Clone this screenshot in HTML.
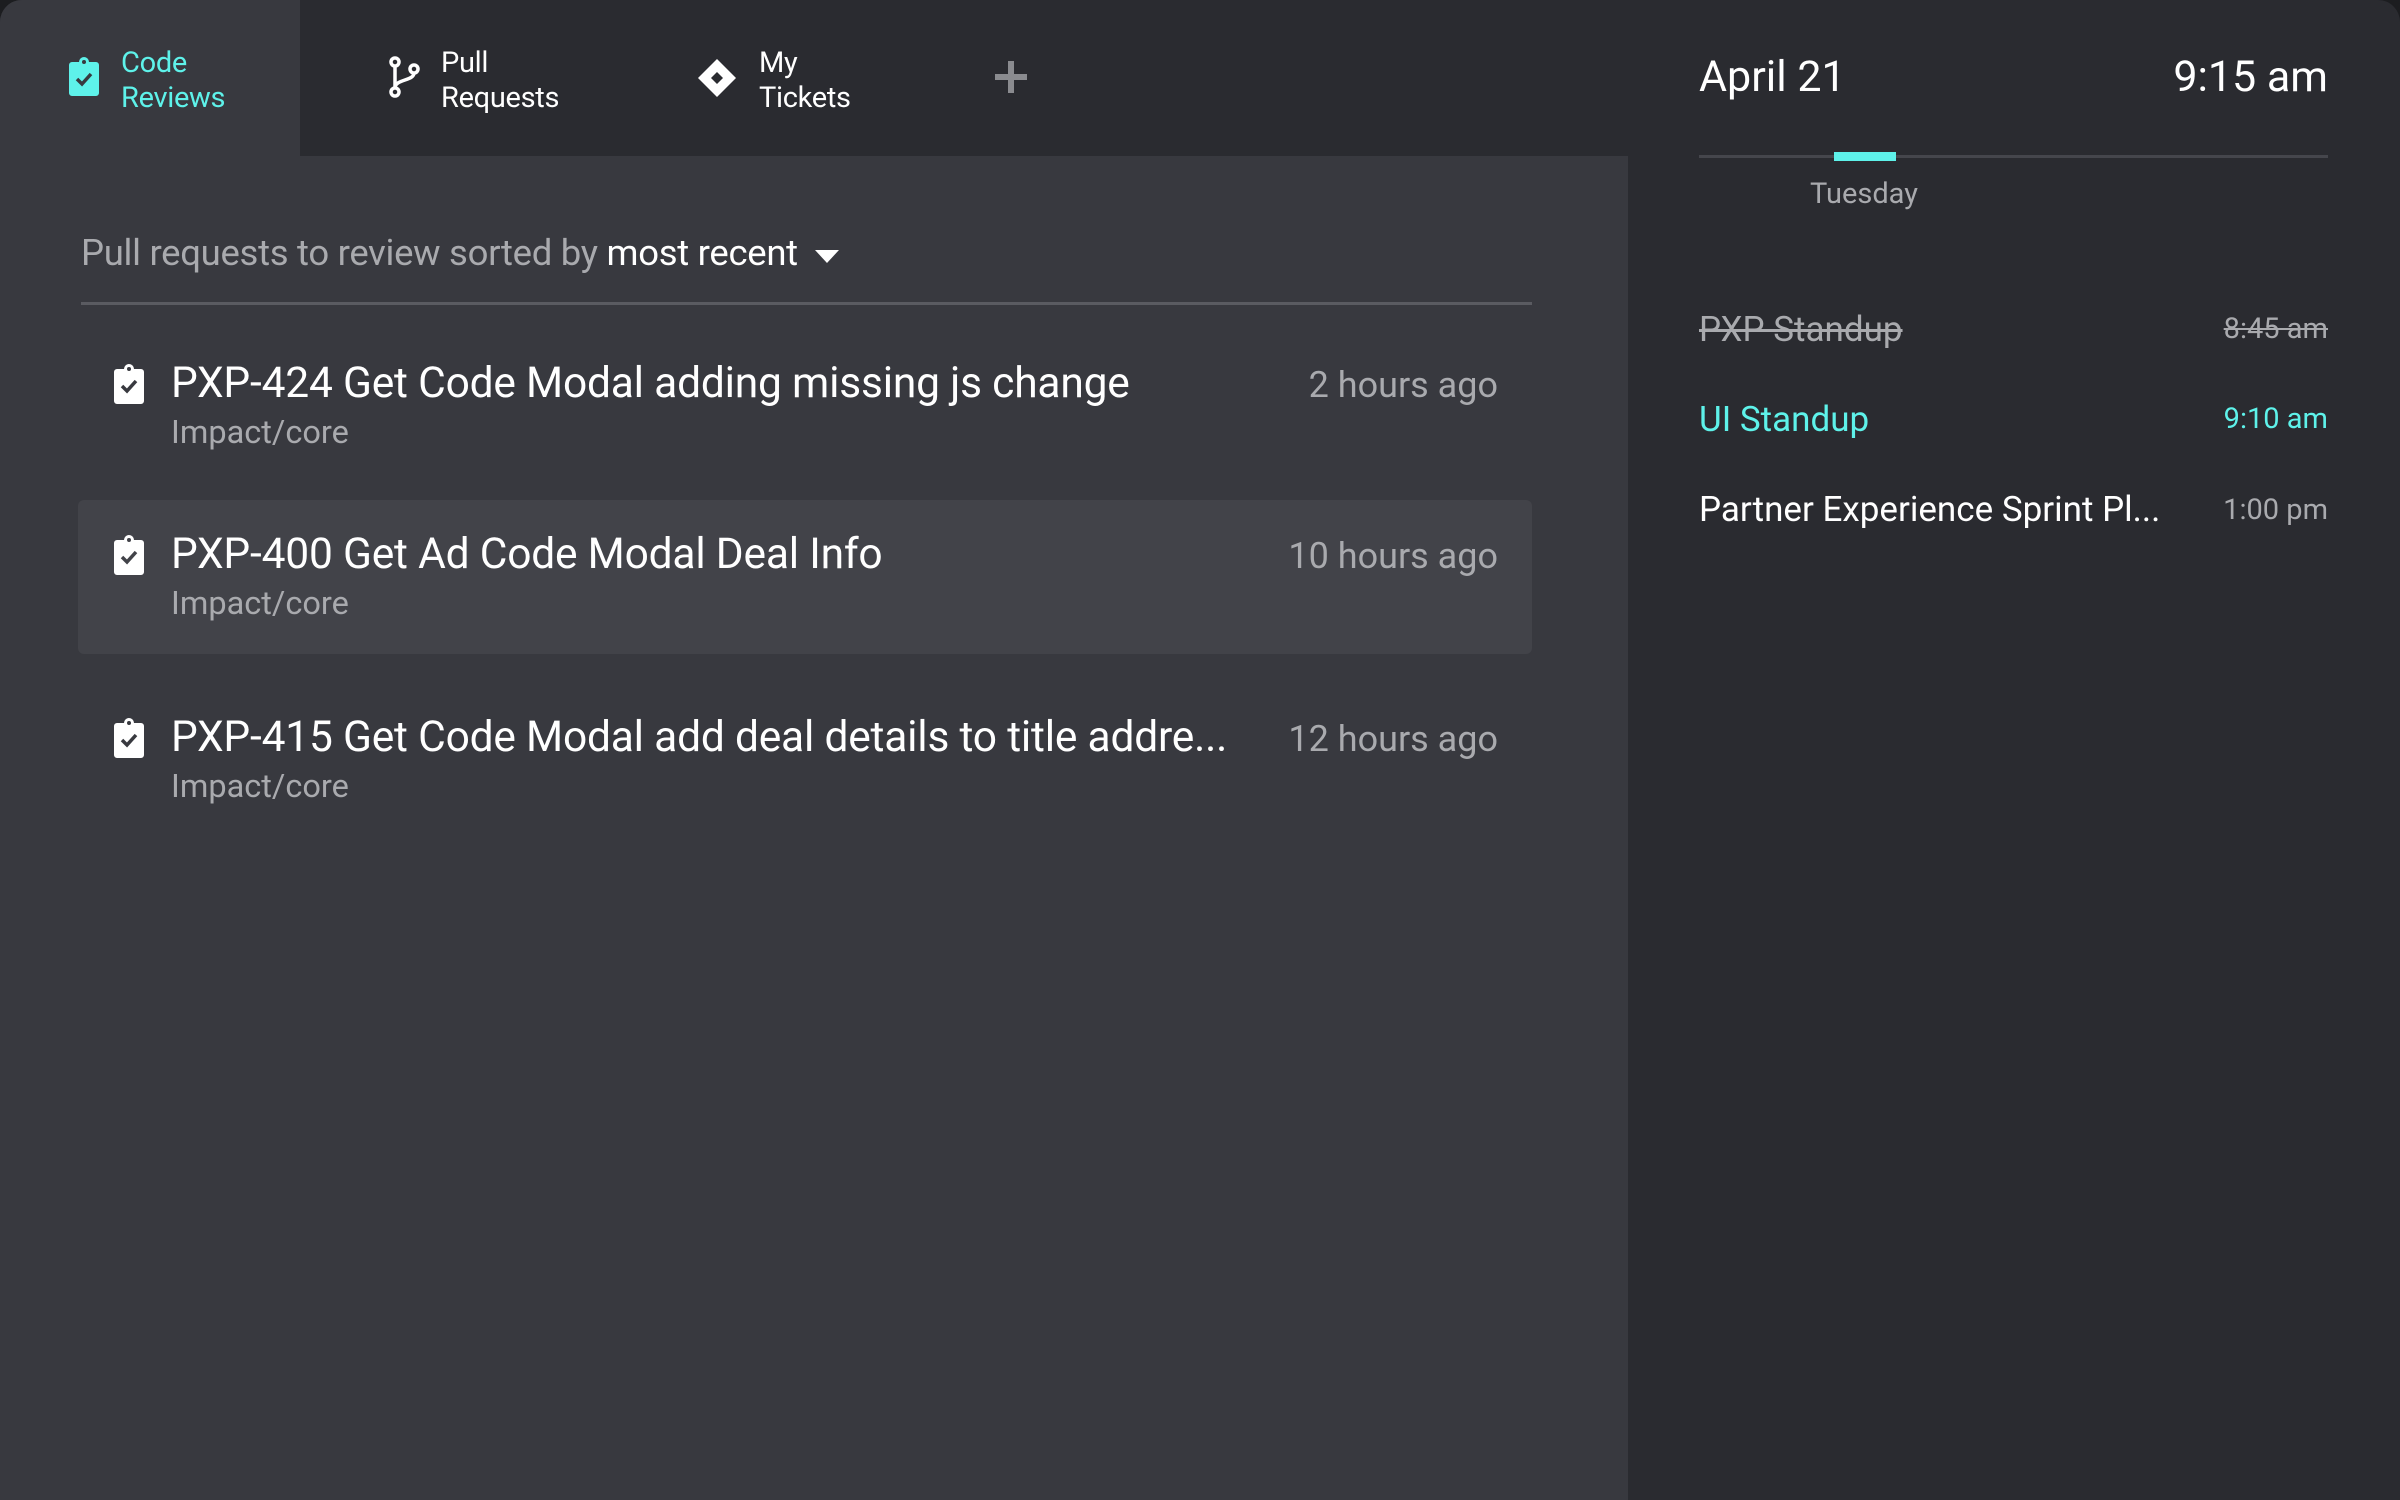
<!DOCTYPE html>
<html><head><meta charset="utf-8"><style>
*{margin:0;padding:0;box-sizing:border-box}
body{width:2400px;height:1500px;background:#1c1d20;font-family:"Roboto","Liberation Sans",sans-serif;overflow:hidden;position:relative}
.left{position:absolute;left:0;top:0;width:1628px;height:1500px;background:#38393f;border-top-left-radius:22px;overflow:hidden}
.right{position:absolute;left:1628px;top:0;width:772px;height:1500px;background:#2a2b30;border-top-right-radius:22px}
.tabbar{position:absolute;left:0;top:0;width:1628px;height:156px;background:#2a2b30}
.tab{position:absolute;top:0;height:156px}
.active{left:0;width:300px;background:#38393f}
.tl{position:absolute;font-size:29px;line-height:35px;color:#fff;top:46px;letter-spacing:-0.3px}
.abs{position:absolute}
.sort{position:absolute;left:81px;top:231px;font-size:36.5px;color:#a9aaae;letter-spacing:-0.3px}
.sort b{font-weight:normal;color:#fff}
.rule{position:absolute;left:81px;top:302px;width:1451px;height:3px;background:#5a5b61}
.hl{position:absolute;left:78px;top:500px;width:1454px;height:154px;background:#424349;border-radius:6px}
.title{position:absolute;left:171px;font-size:42.5px;color:#fff;letter-spacing:-0.2px;white-space:nowrap}
.sub{position:absolute;left:171px;font-size:32.5px;color:#a9aaae}
.time{position:absolute;right:130px;font-size:36px;color:#a9aaae;text-align:right}
.ev{position:absolute;left:1699px;font-size:35px;color:#fff}
.evt{position:absolute;right:72px;font-size:29px;color:#a9aaae}
</style></head><body>
<div class="left">
 <div class="tabbar"></div>
 <div class="tab active"></div>
 <svg class="abs" style="left:69px;top:55px" width="30" height="41" viewBox="0 0 30 41"><path d="M3 7h7a5 5 0 0 1 10 0h7a3 3 0 0 1 3 3v28a3 3 0 0 1-3 3H3a3 3 0 0 1-3-3V10a3 3 0 0 1 3-3z" fill="#5ef2ea"/><circle cx="15" cy="7" r="2" fill="#38393f"/><path d="M8 24l5 5 9-10" stroke="#38393f" stroke-width="3.5" fill="none"/></svg>
 <div class="tl" style="left:121px;color:#5ef2ea">Code<br>Reviews</div>
 <svg class="abs" style="left:388px;top:56px" width="32" height="42" viewBox="0 0 32 42"><g stroke="#fff" stroke-width="3.5" fill="none"><circle cx="7" cy="6" r="4"/><circle cx="7" cy="36" r="4"/><circle cx="26" cy="13" r="4"/><path d="M7 10v22M26 17c0 8-19 6-19 15"/></g></svg>
 <div class="tl" style="left:441px">Pull<br>Requests</div>
 <svg class="abs" style="left:697px;top:58px" width="40" height="40" viewBox="0 0 40 40"><path d="M20 1l19 19-19 19L1 20z" fill="#fff"/><path d="M20 14l6 6-6 6-6-6z" fill="#2a2b30"/></svg>
 <div class="tl" style="left:759px">My<br>Tickets</div>
 <div class="abs" style="left:995px;top:74px;width:32px;height:6px;background:#8a8b8f"></div>
 <div class="abs" style="left:1008px;top:61px;width:6px;height:32px;background:#8a8b8f"></div>

 <div class="sort">Pull requests to review sorted by <b>most recent</b></div>
 <svg class="abs" style="left:815px;top:250px" width="24" height="14"><path d="M0 0h24L12 13z" fill="#fff"/></svg>
 <div class="rule"></div>
 <div class="hl"></div>

 <svg class="abs" style="left:114px;top:362px" width="30" height="42" viewBox="0 0 30 42"><path d="M3 7h7a5 5 0 0 1 10 0h7a3 3 0 0 1 3 3v29a3 3 0 0 1-3 3H3a3 3 0 0 1-3-3V10a3 3 0 0 1 3-3z" fill="#fff"/><circle cx="15" cy="7" r="2" fill="#38393f"/><path d="M8 24l5 5 9-10" stroke="#38393f" stroke-width="3.5" fill="none"/></svg>
 <div class="title" style="top:359px">PXP-424 Get Code Modal adding missing js change</div>
 <div class="sub" style="top:413px">Impact/core</div>
 <div class="time" style="top:364px">2 hours ago</div>

 <svg class="abs" style="left:114px;top:533px" width="30" height="42" viewBox="0 0 30 42"><path d="M3 7h7a5 5 0 0 1 10 0h7a3 3 0 0 1 3 3v29a3 3 0 0 1-3 3H3a3 3 0 0 1-3-3V10a3 3 0 0 1 3-3z" fill="#fff"/><circle cx="15" cy="7" r="2" fill="#424349"/><path d="M8 24l5 5 9-10" stroke="#424349" stroke-width="3.5" fill="none"/></svg>
 <div class="title" style="top:530px">PXP-400 Get Ad Code Modal Deal Info</div>
 <div class="sub" style="top:584px">Impact/core</div>
 <div class="time" style="top:535px">10 hours ago</div>

 <svg class="abs" style="left:114px;top:716px" width="30" height="42" viewBox="0 0 30 42"><path d="M3 7h7a5 5 0 0 1 10 0h7a3 3 0 0 1 3 3v29a3 3 0 0 1-3 3H3a3 3 0 0 1-3-3V10a3 3 0 0 1 3-3z" fill="#fff"/><circle cx="15" cy="7" r="2" fill="#38393f"/><path d="M8 24l5 5 9-10" stroke="#38393f" stroke-width="3.5" fill="none"/></svg>
 <div class="title" style="top:713px">PXP-415 Get Code Modal add deal details to title addre...</div>
 <div class="sub" style="top:767px">Impact/core</div>
 <div class="time" style="top:718px">12 hours ago</div>
</div>
<div class="right"></div>
<div class="abs" style="left:1699px;top:52px;font-size:43px;color:#fff">April 21</div>
<div class="abs" style="right:72px;top:52px;font-size:43px;color:#fff">9:15 am</div>
<div class="abs" style="left:1699px;top:155px;width:629px;height:3px;background:#45464c"></div>
<div class="abs" style="left:1834px;top:152px;width:62px;height:9px;background:#5ef2ea"></div>
<div class="abs" style="left:1764px;top:177px;width:200px;text-align:center;font-size:29px;color:#a9aaae">Tuesday</div>
<div class="ev" style="top:309px;color:#a9aaae;text-decoration:line-through">PXP Standup</div>
<div class="evt" style="top:312px;text-decoration:line-through">8:45 am</div>
<div class="ev" style="top:399px;color:#5ef2ea">UI Standup</div>
<div class="evt" style="top:402px;color:#5ef2ea">9:10 am</div>
<div class="ev" style="top:489px">Partner Experience Sprint Pl...</div>
<div class="evt" style="top:493px">1:00 pm</div>
</body></html>
